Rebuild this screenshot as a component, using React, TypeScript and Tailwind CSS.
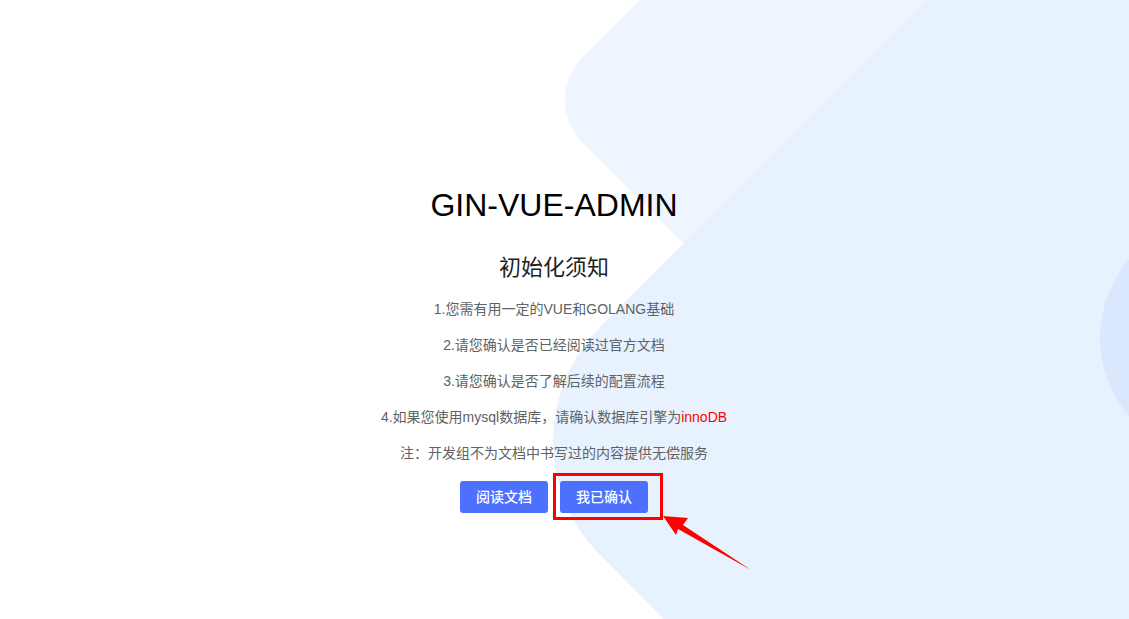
const notes = [
  '1.您需有用一定的VUE和GOLANG基础',
  '2.请您确认是否已经阅读过官方文档',
  '3.请您确认是否了解后续的配置流程',
]

function Backdrop() {
  return (
    <svg
      className="absolute inset-0"
      width="1129"
      height="619"
      viewBox="0 0 1129 619"
      aria-hidden="true"
    >
      <path
        d="M582.4 57.6 L640 0 L1129 0 L1129 619 L1059 619 L582.4 142.4 A60 60 0 0 1 582.4 57.6 Z"
        fill="#eff5fe"
      />
      <path
        d="M600.6 326.4 L927 0 L1129 0 L1129 619 L664 619 L600.6 555.6 A162 162 0 0 1 600.6 326.4 Z"
        fill="#e8f2fe"
      />
      <circle cx="1221" cy="338" r="121" fill="#dae7fd" />
    </svg>
  )
}

function Arrow() {
  return (
    <svg
      className="absolute left-[100px] top-[30px]"
      width="95"
      height="62"
      viewBox="0 0 95 62"
      aria-hidden="true"
    >
      <polygon points="3,5 28,7 23,14 91,59 18,18 16,24" fill="#ff0000" />
    </svg>
  )
}

export default function App() {
  return (
    <div className="relative h-[619px] w-full overflow-hidden bg-white font-['Liberation_Sans','Noto_Sans_CJK_SC',sans-serif]">
      <Backdrop />
      <div className="relative flex flex-col items-center pr-[21px] pt-[185px]">
        <h1 className="text-[32px] leading-[40px] text-black">GIN-VUE-ADMIN</h1>
        <h2 className="mt-[28px] text-[22px] leading-[30px] text-[#1f1f1f]">初始化须知</h2>
        <div className="mt-[8px] flex flex-col items-center text-[14px] leading-[36px] text-[#606266]">
          {notes.map((n) => (
            <p key={n}>{n}</p>
          ))}
          <p>
            4.如果您使用mysql数据库，请确认数据库引擎为<span className="text-[#ff0000]">innoDB</span>
          </p>
          <p>注：开发组不为文档中书写过的内容提供无偿服务</p>
        </div>
        <div className="mt-[10px] flex gap-3">
          <button className="h-8 w-[88px] rounded-[3px] bg-[#4d70ff] text-[14px] font-medium text-white">
            阅读文档
          </button>
          <div className="relative">
            <button className="h-8 w-[88px] rounded-[3px] bg-[#4d70ff] text-[14px] font-medium text-white">
              我已确认
            </button>
            <div className="absolute left-[-7px] top-[-8px] h-[47px] w-[110px] border-[3px] border-[#ff0000]" />
            <Arrow />
          </div>
        </div>
      </div>
    </div>
  )
}
